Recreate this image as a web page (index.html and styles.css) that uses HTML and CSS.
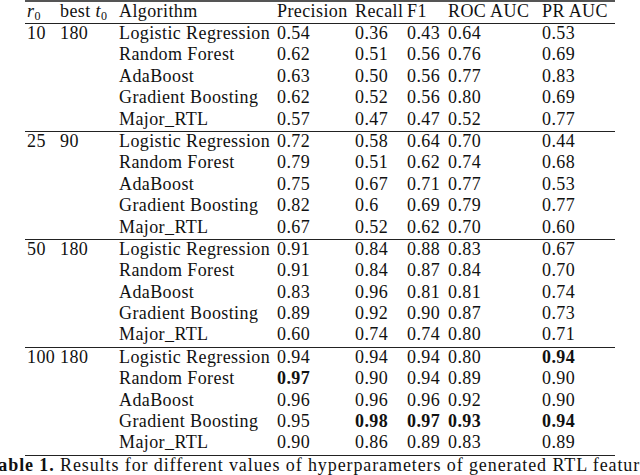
FILE: index.html
```html
<!DOCTYPE html>
<html>
<head>
<meta charset="utf-8">
<link rel="stylesheet" href="styles.css">
</head>
<body>
<div class="table">
  <div class="row head">
    <span><i>r</i><sub>0</sub></span><span>best <i>t</i><sub>0</sub></span><span>Algorithm</span><span>Precision</span><span>Recall</span><span>F1</span><span>ROC AUC</span><span>PR AUC</span>
  </div>
  <div class="group">
    <div class="row"><span>10</span><span>180</span><span>Logistic Regression</span><span>0.54</span><span>0.36</span><span>0.43</span><span>0.64</span><span>0.53</span></div>
    <div class="row"><span></span><span></span><span>Random Forest</span><span>0.62</span><span>0.51</span><span>0.56</span><span>0.76</span><span>0.69</span></div>
    <div class="row"><span></span><span></span><span>AdaBoost</span><span>0.63</span><span>0.50</span><span>0.56</span><span>0.77</span><span>0.83</span></div>
    <div class="row"><span></span><span></span><span>Gradient Boosting</span><span>0.62</span><span>0.52</span><span>0.56</span><span>0.80</span><span>0.69</span></div>
    <div class="row"><span></span><span></span><span>Major_RTL</span><span>0.57</span><span>0.47</span><span>0.47</span><span>0.52</span><span>0.77</span></div>
  </div>
  <div class="group">
    <div class="row"><span>25</span><span>90</span><span>Logistic Regression</span><span>0.72</span><span>0.58</span><span>0.64</span><span>0.70</span><span>0.44</span></div>
    <div class="row"><span></span><span></span><span>Random Forest</span><span>0.79</span><span>0.51</span><span>0.62</span><span>0.74</span><span>0.68</span></div>
    <div class="row"><span></span><span></span><span>AdaBoost</span><span>0.75</span><span>0.67</span><span>0.71</span><span>0.77</span><span>0.53</span></div>
    <div class="row"><span></span><span></span><span>Gradient Boosting</span><span>0.82</span><span>0.6</span><span>0.69</span><span>0.79</span><span>0.77</span></div>
    <div class="row"><span></span><span></span><span>Major_RTL</span><span>0.67</span><span>0.52</span><span>0.62</span><span>0.70</span><span>0.60</span></div>
  </div>
  <div class="group">
    <div class="row"><span>50</span><span>180</span><span>Logistic Regression</span><span>0.91</span><span>0.84</span><span>0.88</span><span>0.83</span><span>0.67</span></div>
    <div class="row"><span></span><span></span><span>Random Forest</span><span>0.91</span><span>0.84</span><span>0.87</span><span>0.84</span><span>0.70</span></div>
    <div class="row"><span></span><span></span><span>AdaBoost</span><span>0.83</span><span>0.96</span><span>0.81</span><span>0.81</span><span>0.74</span></div>
    <div class="row"><span></span><span></span><span>Gradient Boosting</span><span>0.89</span><span>0.92</span><span>0.90</span><span>0.87</span><span>0.73</span></div>
    <div class="row"><span></span><span></span><span>Major_RTL</span><span>0.60</span><span>0.74</span><span>0.74</span><span>0.80</span><span>0.71</span></div>
  </div>
  <div class="group">
    <div class="row"><span>100 180</span><span></span><span>Logistic Regression</span><span>0.94</span><span>0.94</span><span>0.94</span><span>0.80</span><span class="b">0.94</span></div>
    <div class="row"><span></span><span></span><span>Random Forest</span><span class="b">0.97</span><span>0.90</span><span>0.94</span><span>0.89</span><span>0.90</span></div>
    <div class="row"><span></span><span></span><span>AdaBoost</span><span>0.96</span><span>0.96</span><span>0.96</span><span>0.92</span><span>0.90</span></div>
    <div class="row"><span></span><span></span><span>Gradient Boosting</span><span>0.95</span><span class="b">0.98</span><span class="b">0.97</span><span class="b">0.93</span><span class="b">0.94</span></div>
    <div class="row"><span></span><span></span><span>Major_RTL</span><span>0.90</span><span>0.86</span><span>0.89</span><span>0.83</span><span>0.89</span></div>
  </div>
</div>
<div class="caption"><span><b>Table 1.</b> Results for different values of hyperparameters of generated RTL features</span></div>
</body>
</html>
```
FILE: styles.css
```css
html, body {
  margin: 0;
  padding: 0;
  background: #fff;
  overflow: hidden;
  width: 640px;
  height: 475px;
}
body {
  font-family: "Liberation Serif", "Times New Roman", serif;
  font-size: 18px;
  color: #111;
  letter-spacing: 0.4px;
}
.table {
  margin-left: 25px;
  width: 590px;
  border-top: 2px solid #555;
}
.row {
  display: grid;
  grid-template-columns: 33px 59px 158px 78px 52px 41px 94px 75px;
  line-height: 18.4px;
  height: 21.4px;
  box-sizing: border-box;
  padding-bottom: 3px;
  white-space: nowrap;
}
.row span {
  padding-left: 2px;
  overflow: visible;
}
.row.head {
  height: 21px;
  border-bottom: 1px solid #222;
  box-sizing: content-box;
  padding-bottom: 0;
  line-height: 18px;
}
.group {
  border-bottom: 1px solid #222;
}
.b {
  font-weight: bold;
}
sub {
  font-size: 12px;
  vertical-align: -3px;
  line-height: 0;
}
.caption {
  width: 640px;
  display: flex;
  justify-content: center;
  white-space: nowrap;
  line-height: 19px;
  padding-left: 4px;
  box-sizing: border-box;
  letter-spacing: 0.9px;
}
```
